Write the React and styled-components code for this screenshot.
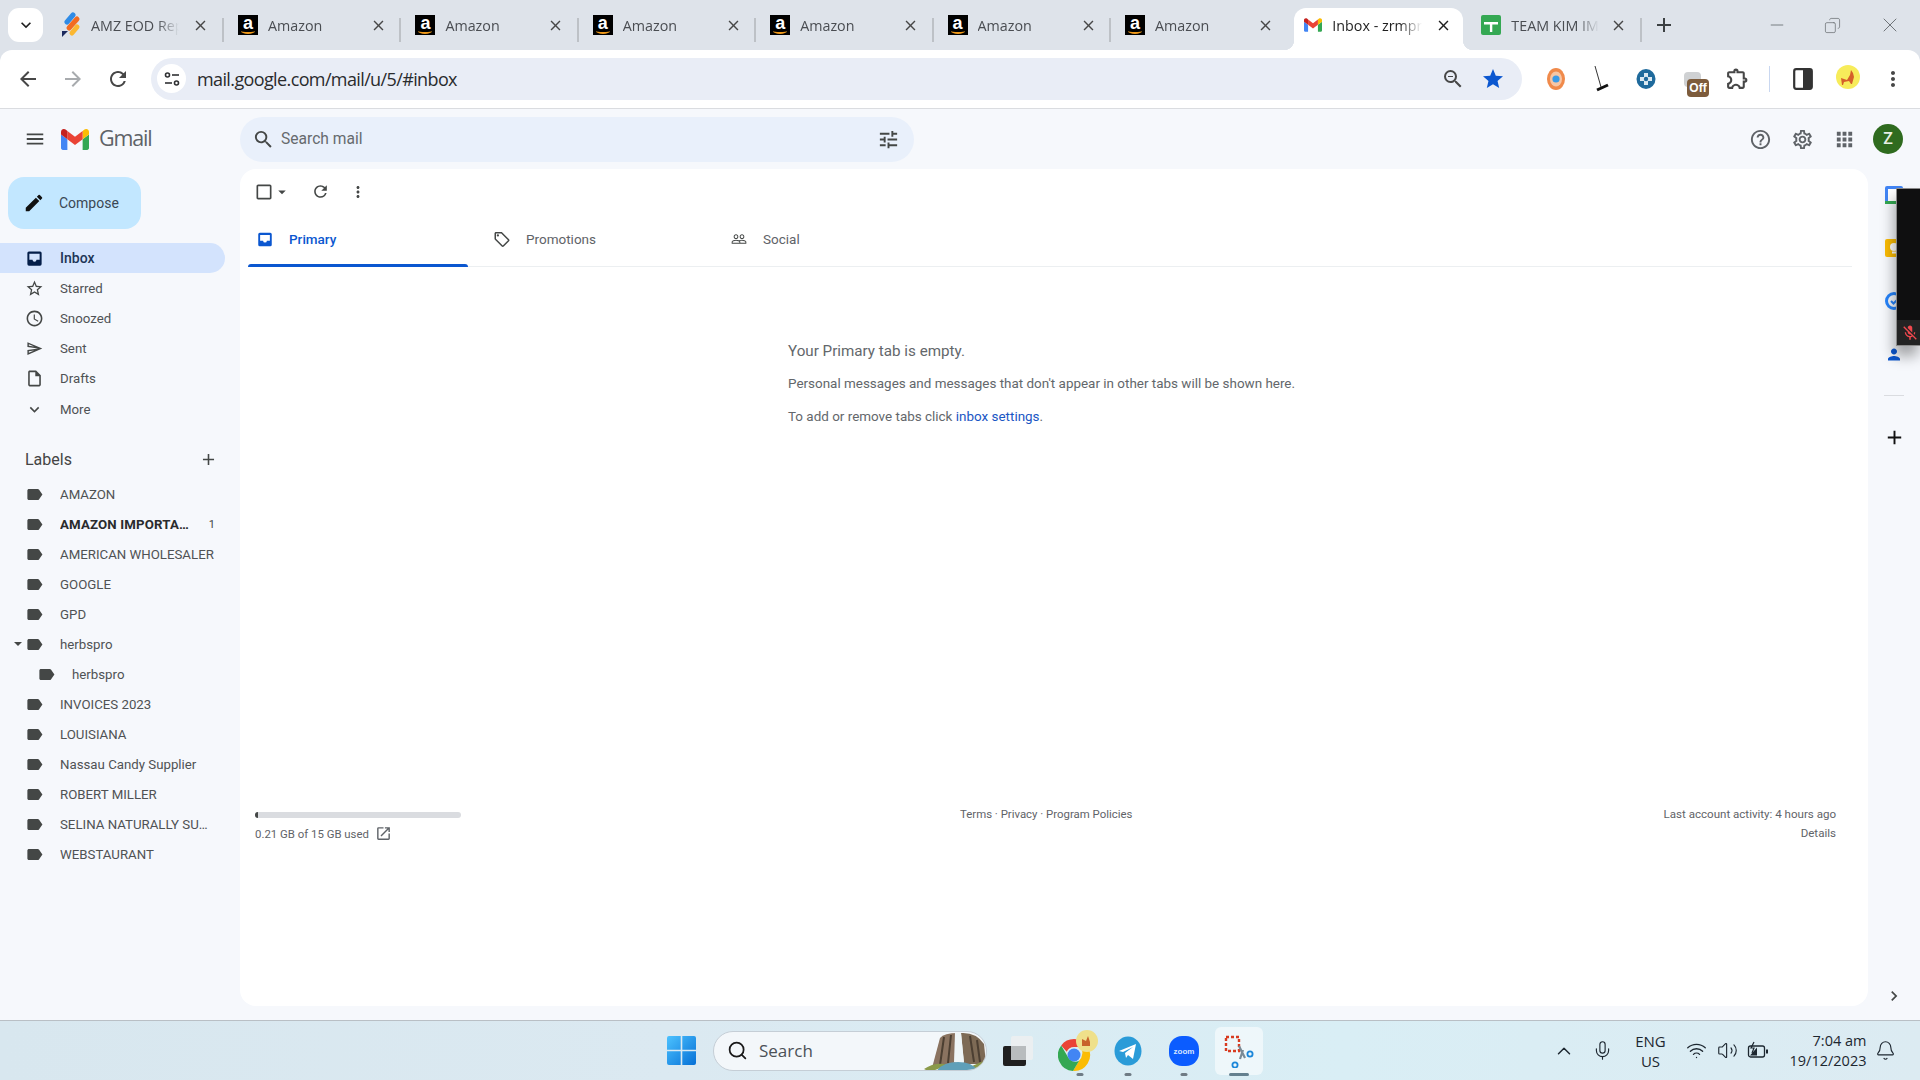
import React from "react";
import styled, { createGlobalStyle } from "styled-components";
import {
  MdArrowBack, MdArrowForward, MdRefresh, MdClose, MdAdd, MdStar, MdMoreVert, MdZoomOut, MdOutlineExtension,
  MdMenu, MdSearch, MdTune, MdHelpOutline, MdOutlineSettings, MdApps, MdEdit, MdStarBorder, MdAccessTime,
  MdOutlineSend, MdOutlineInsertDriveFile, MdExpandMore, MdLabel, MdCheckBoxOutlineBlank, MdArrowDropDown,
  MdOutlineLocalOffer, MdPeopleOutline, MdOpenInNew, MdChevronRight, MdPerson, MdKeyboardArrowDown,
  MdMicOff,
} from "react-icons/md";
import { Minus, Copy, X, ChevronUp, Mic, Bell, Wifi, Volume2, Search as SearchGlyph } from "lucide-react";

const Global = createGlobalStyle`
  html, body { margin: 0; padding: 0; background: #f6f8fc; overflow: hidden; }
  * { box-sizing: border-box; }
  body { font-family: Roboto, "Liberation Sans", sans-serif; }
`;

const Screen = styled.div`
  width: 1920px; height: 1080px; display: flex; flex-direction: column; overflow: hidden; background: #dee3ea;
`;

/* ---------- Browser tab strip ---------- */
const TabStrip = styled.div`
  height: 50px; flex: none; display: flex; align-items: flex-end; padding-left: 8px; background: #dee3ea;
  font-family: "Open Sans", Roboto, sans-serif;
`;
const TabSearch = styled.div`
  width: 35px; height: 34px; margin: 0 4px 8px 0; background: #fff; border-radius: 11px; flex: none;
  display: flex; align-items: center; justify-content: center; color: #1f1f1f; font-size: 20px;
`;
const Tab = styled.div`
  width: ${p => p.$w}px; height: 42px; flex: none; display: flex; align-items: center; padding: 0 0 8px ${p => p.$pad}px;
  position: relative; color: #4a4d52;
`;
const Sep = styled.i`
  width: 2px; height: 24px; background: #bdc1c6; flex: none; margin-bottom: 8px; margin-left: ${p => p.$ml || 0}px;
`;
const ActiveTab = styled(Tab)`
  background: #fff; border-radius: 12px 12px 0 0; color: #1f1f1f; margin-left: 8px;
  &::before, &::after { content: ""; position: absolute; bottom: 0; width: 10px; height: 10px; }
  &::before { left: -10px; background: radial-gradient(circle at 0 0, transparent 10px, #fff 10.5px); }
  &::after { right: -10px; background: radial-gradient(circle at 100% 0, transparent 10px, #fff 10.5px); }
`;
const TabTitle = styled.span`
  width: ${p => p.$w}px; margin-left: 10px; white-space: nowrap; overflow: hidden; flex: none; font-size: 14.3px;
  -webkit-mask-image: linear-gradient(90deg, #000 75%, transparent 100%); mask-image: linear-gradient(90deg, #000 75%, transparent 100%);
`;
const TabClose = styled.span`
  display: flex; color: ${p => p.$dark ? "#1f1f1f" : "#474747"}; font-size: 17px; flex: none; margin-left: ${p => p.$ml || 0}px;
`;
const AmazonMark = styled.span`
  width: 20px; height: 20px; background: #000; color: #fff; display: flex; justify-content: center; position: relative; flex: none;
  font: bold 18px/16px "Liberation Sans", sans-serif;
  &::after { content: ""; position: absolute; left: 3px; right: 3px; bottom: 1px; height: 4px; border-bottom: 2px solid #f09a1a; border-radius: 0 0 50% 50%; }
`;
const NewTab = styled.span`
  display: flex; font-size: 24px; color: #3c4043; margin: 0 0 13px 10px;
`;
const WinControls = styled.div`
  margin-left: auto; display: flex; align-items: center; gap: 37px; padding: 0 18px 13px 0; color: #6f7478;
`;
const WinButton = styled.span`display: flex;`;

/* ---------- Browser toolbar ---------- */
const BrowserBar = styled.div`
  height: 59px; flex: none; background: #fff; border-radius: 12px 12px 0 0; border-bottom: 1px solid #dadce0;
  display: flex; align-items: center; padding: 0 0 1px 16px;
`;
const NavIcon = styled.span`
  width: 24px; display: flex; justify-content: center; font-size: 24px; margin-right: ${p => p.$mr}px; color: ${p => p.$c || "#474747"};
`;
const Omnibox = styled.div`
  width: 1371px; height: 42px; border-radius: 21px; background: #e9edf6; display: flex; align-items: center; padding: 0 17px 0 6px; flex: none;
`;
const SiteInfo = styled.span`
  width: 29px; height: 29px; border-radius: 50%; background: #fff; display: flex; align-items: center; justify-content: center; flex: none;
`;
const Url = styled.span`
  margin-left: 11px; font: 400 18px "Open Sans", Roboto, sans-serif; letter-spacing: -0.62px; color: #2a2b2d; flex: 1;
`;
const ExtRow = styled.div`
  display: flex; align-items: center; margin-left: 20px; flex: 1; color: #474747;
`;
const ExtSlot = styled.span`
  width: 28px; flex: none; display: flex; justify-content: center; align-items: center; position: relative; margin-left: ${p => p.$ml || 0}px;
`;
const OffBadge = styled.span`
  position: absolute; left: 4px; top: 11px; width: 22px; height: 18px; background: #7d5c3c; color: #fff; border-radius: 4px;
  font: 700 12px/18px "Liberation Sans", sans-serif; text-align: center;
`;
const ToolDivider = styled.i`
  width: 1px; height: 26px; background: #c9d7f0; flex: none;
`;

/* ---------- Gmail ---------- */
const GmailShell = styled.div`
  flex: 1; min-height: 0; background: #f6f8fc; display: flex; flex-direction: column;
`;
const TopBar = styled.header`
  height: 60px; flex: none; display: flex; align-items: center;
`;
const Brand = styled.div`
  width: 240px; flex: none; display: flex; align-items: center; padding-left: 24px; color: #5f6368;
`;
const Burger = styled.span`display: flex; font-size: 22px; color: #444746; margin-right: 15px;`;
const Wordmark = styled.span`
  font: 400 21.5px/26px "Open Sans", Roboto, sans-serif; letter-spacing: -1.15px; color: #5f6368; margin: -2px 0 0 10px;
`;
const SearchBox = styled.div`
  width: 674px; height: 45px; border-radius: 23px; background: #e9f0fb; display: flex; align-items: center; padding: 0 14px 0 12px; color: #444746;
`;
const SearchText = styled.span`
  flex: 1; margin-left: 6px; font-size: 15.6px; color: #666a6e;
`;
const TopIcons = styled.div`
  margin-left: auto; display: flex; align-items: center; color: #5f6368;
`;
const TopIcon = styled.span`
  width: 42px; display: flex; justify-content: center; font-size: 23px;
`;
const Avatar = styled.span`
  width: 30px; height: 30px; border-radius: 50%; background: #2f6b1f; color: #e8efe5; font: 500 16px/30px Roboto, sans-serif; text-align: center; margin: 0 17px 0 8px;
`;
const Body = styled.div`
  flex: 1; min-height: 0; display: flex;
`;
const Sidebar = styled.nav`
  width: 240px; flex: none; display: flex; flex-direction: column;
`;
const Compose = styled.div`
  width: 133px; height: 52px; margin: 8px 0 14px 8px; border-radius: 16px; background: #c2e7ff; display: flex; align-items: center; padding-left: 16px;
  color: #3a4854; font-size: 14px; font-weight: 400;
`;
const ComposeIcon = styled.span`display: flex; font-size: 22px; color: #111; margin-right: 14px; margin-left: -1px;`;
const NavRow = styled.div`
  width: 225px; height: ${p => p.$h || 30}px; flex: none; display: flex; align-items: center; position: relative;
  padding-left: ${p => p.$indent ? 36 : 24}px; border-radius: 0 15px 15px 0; font-size: ${p => p.$active ? 14 : 13.25}px;
  background: ${p => p.$active ? "#d3e3fd" : "transparent"};
  color: ${p => p.$active ? "#1d3557" : "#4f5254"};
  font-weight: ${p => p.$active ? 500 : p.$bold ? 700 : 400};
  ${p => p.$bold ? "color:#2a2b2d; letter-spacing: .15px;" : ""}
`;
const NavIconSlot = styled.span`
  width: 20px; flex: none; display: flex; justify-content: center; font-size: ${p => p.$s || 19}px; margin-right: 16px;
  color: ${p => p.$active ? "#041e49" : "#444746"};
`;
const NavText = styled.span`
  white-space: nowrap; flex: 1; overflow: hidden; text-overflow: ellipsis; padding-right: ${p => p.$pr || 8}px;
`;
const Count = styled.span`
  font-size: 11px; font-weight: 400; color: #444746; margin-right: 10px;
`;
const Caret = styled.span`
  position: absolute; left: 14px; top: 13px; width: 0; height: 0; border: 4px solid transparent; border-top: 4px solid #444746; 
`;
const LabelsHead = styled.div`
  width: 225px; height: 30px; margin: 19px 0 5px; display: flex; align-items: center; justify-content: space-between;
  padding: 0 7px 0 25px; font-size: 16px; color: #444;
`;
const HeadAdd = styled.span`display: flex; font-size: 19px; color: #444746;`;

const MainPanel = styled.main`
  width: 1628px; flex: none; height: 837px; background: #fff; border-radius: 16px; display: flex; flex-direction: column;
`;
const MailTools = styled.div`
  height: 45px; flex: none; display: flex; align-items: center; padding-left: 14px; color: #444746;
`;
const ToolIcon = styled.span`
  display: flex; font-size: ${p => p.$s || 18}px; margin-left: ${p => p.$ml || 0}px;
`;
const CategoryBar = styled.div`
  height: 53px; margin: 0 16px 0 8px; flex: none; display: flex; box-shadow: inset 0 -1px #eceff1;
`;
const Category = styled.div`
  width: 237px; display: flex; position: relative; align-items: center; padding: 0 0 3px 8px; font-size: 13.5px; font-weight: ${p => p.$active ? 500 : 400};
  color: ${p => p.$active ? "#0b57d0" : "#5f6368"};
  ${p => p.$active ? `&::after { content: ""; position: absolute; left: 0; bottom: 0; width: 220px; height: 3px; background: #0b57d0; border-radius: 3px 3px 0 0; }` : ""}
`;
const CategoryIcon = styled.span`
  display: flex; width: 18px; justify-content: center; font-size: 19px; margin-right: 15px; color: ${p => p.$active ? "#0b57d0" : "#444746"};
`;
const Empty = styled.section`
  margin: 68px 0 0 548px; color: #63676b; font-size: 13.45px; line-height: 33px;
`;
const EmptyHead = styled.div`font-size: 15.2px; line-height: 32px;`;
const Link = styled.a`color: #1a56c4;`;
const MailFooter = styled.footer`
  margin-top: 379px; padding: 0 32px 0 15px; display: grid; grid-template-columns: 705px auto 1fr; font-size: 11.4px; color: #5f6368;
`;
const Storage = styled.div`display: flex; flex-direction: column;`;
const Meter = styled.div`
  width: 206px; height: 6px; border-radius: 3px; background: #dadce0; margin-bottom: 7px; overflow: hidden;
`;
const MeterFill = styled.div`height: 100%; background: #444746;`;
const StorageText = styled.div`display: flex; align-items: center;`;
const StorageLink = styled.span`display: flex; font-size: 17px; margin-left: 6px;`;
const Policies = styled.div`margin-top: -5px;`;
const Activity = styled.div`text-align: right; line-height: 19px; margin-top: -7px; font-size: 11.55px;`;

const Rail = styled.aside`
  width: 52px; flex: none; display: flex; flex-direction: column; align-items: center; position: relative; padding-top: 17px;
`;
const RailIcon = styled.span`
  display: flex; height: 18px; width: 18px; margin-bottom: 35px; position: relative; font-size: 23px; justify-content: center; align-items: center;
  color: #0b57d0;
`;
const RailDivider = styled.i`width: 20px; height: 1px; background: #dadce0; margin: -3px 0 30px;`;
const RailAdd = styled.span`display: flex; font-size: 23px; color: #111;`;
const RailChevron = styled.span`display: flex; font-size: 20px; color: #444746; margin-top: auto; margin-bottom: 14px;`;
const VideoOverlay = styled.div`
  position: absolute; left: 28px; top: 19px; width: 24px; height: 158px; background: #0f0f10; border: 1px solid #8a8a8a; border-right: 0;
  box-shadow: -2px 10px 14px rgba(0,0,0,.35); display: flex; flex-direction: column; justify-content: flex-end;
`;
const VideoStrip = styled.div`
  height: 25px; background: #232323; display: flex; align-items: center; padding-left: 4px; color: #f0484e; font-size: 18px;
`;

/* ---------- Windows taskbar ---------- */
const Taskbar = styled.footer`
  height: 60px; flex: none; background: linear-gradient(90deg, #d8e7ef 0%, #dbe9f1 35%, #d9eef5 70%, #dcebf2 100%);
  border-top: 1px solid #b9bfc5; display: flex; align-items: center; padding-left: 667px; color: #1d2730;
  font-family: "Open Sans", Roboto, sans-serif;
`;
const Pill = styled.div`
  width: 274px; height: 40px; margin: 0 16px 0 17px; border-radius: 20px; background: #f3f7fa; border: 1px solid #c5ced6; position: relative; overflow: hidden;
  display: flex; align-items: center; padding-left: 13px; font-size: 17px; color: #4b5157;
`;
const PillIcon = styled.span`display: flex; color: #1a1a1a; margin-right: 11px;`;
const AppSlot = styled.span`
  width: ${p => p.$w}px; height: 48px; flex: none; display: flex; align-items: center; justify-content: center; position: relative; margin-left: ${p => p.$ml || 0}px;
  ${p => p.$on ? "background: rgba(255,255,255,.55); border-radius: 6px;" : ""}
  &::after { content: ""; position: absolute; bottom: -1px; left: 50%; transform: translateX(-50%); width: ${p => p.$on ? 20 : 7}px; height: 3px; border-radius: 2px; background: ${p => p.$on ? "#64808f" : "#6f7b84"}; display: ${p => p.$bare ? "none" : "block"}; }
`;
const Tray = styled.div`
  margin-left: auto; display: flex; align-items: center; color: #1d2730; padding-right: 15.5px;
`;
const TrayIcon = styled.span`
  display: flex; justify-content: center; width: ${p => p.$w}px; margin-left: ${p => p.$ml || 0}px;
`;
const TrayText = styled.span`
  font-size: ${p => p.$right ? 14.5 : 15}px; line-height: 20px; text-align: ${p => p.$right ? "right" : "center"}; width: ${p => p.$w}px; white-space: nowrap;
`;

/* ---------- Drawings ---------- */
const InboxFilled = () => (
  <svg width="1em" height="1em" viewBox="0 0 24 24" fill="currentColor">
    <path fillRule="evenodd" d="M5 3h14a2 2 0 012 2v14a2 2 0 01-2 2H5a2 2 0 01-2-2V5a2 2 0 012-2zm.5 3v7.5h4a2.5 2.5 0 005 0h4V6z" />
  </svg>
);
const GmailM = ({ w = 28, h = 21 }) => (
  <svg width={w} height={h} viewBox="52 42 88 66">
    <path fill="#4285f4" d="M58 108h14V74L52 59v43c0 3.32 2.69 6 6 6" />
    <path fill="#34a853" d="M120 108h14c3.32 0 6-2.69 6-6V59l-20 15" />
    <path fill="#fbbc04" d="M120 48v26l20-15v-8c0-7.42-8.47-11.65-14.4-7.2" />
    <path fill="#ea4335" d="M72 74V48l24 18 24-18v26L96 92" />
    <path fill="#c5221f" d="M52 51v8l20 15V48l-5.6-4.2c-5.94-4.45-14.4-.22-14.4 7.2" />
  </svg>
);
const JiraMark = () => (
  <svg width="20" height="26" viewBox="0 0 20 26" style={{ flex: "none" }}>
    <line x1="6" y1="10" x2="12" y2="3" stroke="#2f8be6" strokeWidth="5" strokeLinecap="round" />
    <line x1="8" y1="16" x2="16" y2="7" stroke="#f26b21" strokeWidth="5" strokeLinecap="round" />
    <line x1="11" y1="21" x2="16" y2="15" stroke="#fbb731" strokeWidth="5" strokeLinecap="round" />
    <path d="M1 19h6l-6 6z" fill="#1c2a5e" />
  </svg>
);
const SheetsMark = () => (
  <svg width="20" height="20" viewBox="0 0 20 20" style={{ flex: "none" }}>
    <rect width="20" height="20" rx="2" fill="#34a853" />
    <path d="M3 7h14v2.4H11.3V17H8.9V9.4H3z" fill="#fff" />
  </svg>
);
const TuneMini = () => (
  <svg width="16" height="16" viewBox="0 0 16 16" fill="none" stroke="#303134" strokeWidth="1.6">
    <circle cx="3.5" cy="4" r="2" /><path d="M8 4h7" />
    <circle cx="12.5" cy="12" r="2" /><path d="M1 12h7" />
  </svg>
);
const OrangeExt = () => (
  <svg width="20" height="24" viewBox="0 0 20 24">
    <ellipse cx="10" cy="12" rx="9" ry="11" fill="#f08a4b" />
    <ellipse cx="10" cy="12" rx="6" ry="7.5" fill="#f7c6a5" />
    <circle cx="10" cy="12" r="3.6" fill="#3b9be8" />
  </svg>
);
const Broom = () => (
  <svg width="22" height="28" viewBox="0 0 22 28" fill="none">
    <path d="M5 1l6 21" stroke="#333" strokeWidth="1" />
    <path d="M7 25l11-5" stroke="#111" strokeWidth="3" />
  </svg>
);
const CrossExt = () => (
  <svg width="20" height="24" viewBox="0 0 20 24">
    <ellipse cx="10" cy="12" rx="9.5" ry="10" fill="#1f6a9c" />
    <path d="M8 6h4v4h4v4h-4v4H8v-4H4v-4h4z" fill="#dce9f1" />
    <circle cx="10" cy="12" r="2.2" fill="#1f6a9c" />
  </svg>
);
const OffExt = () => (
  <svg width="26" height="22" viewBox="0 0 26 22">
    <rect x="0" y="4" width="17" height="15" rx="4" fill="#cfd1d3" />
  </svg>
);
const SidePanel = () => (
  <svg width="20" height="22" viewBox="0 0 20 22">
    <rect x="1.2" y="1.2" width="17.6" height="19.6" rx="2" fill="none" stroke="#333" strokeWidth="2.2" />
    <rect x="10" y="1" width="9" height="20" rx="1" fill="#333" />
  </svg>
);
const FoxAvatar = () => (
  <svg width="26" height="28" viewBox="0 0 26 28">
    <ellipse cx="13" cy="12" rx="12" ry="12" fill="#f7ec5a" />
    <path d="M6 13l6 2 3-5 1-5 2 3 1 4-2 7h-1l-2-3-5 1-1 3H7z" fill="#d5602a" />
  </svg>
);
const CalendarMark = () => (
  <svg width="18" height="18" viewBox="0 0 18 18">
    <rect width="18" height="18" rx="2" fill="#4285f4" />
    <rect x="3" y="3" width="12" height="12" fill="#fff" />
    <rect y="15" width="18" height="3" fill="#34a853" />
  </svg>
);
const KeepMark = () => (
  <svg width="18" height="18" viewBox="0 0 18 18">
    <rect width="18" height="18" rx="2" fill="#fbbc04" />
    <circle cx="9" cy="8" r="4" fill="#fff" />
    <rect x="7" y="12.5" width="4" height="2" fill="#fff" />
  </svg>
);
const TasksMark = () => (
  <svg width="18" height="18" viewBox="0 0 18 18" fill="none">
    <circle cx="9" cy="9" r="7.5" stroke="#2684fc" strokeWidth="3" />
    <path d="M6 9l2.5 2.5L13 7" stroke="#2684fc" strokeWidth="2" />
  </svg>
);
const WinLogo = () => (
  <svg width="29" height="29" viewBox="0 0 29 29" style={{ flex: "none" }}>
    <defs>
      <linearGradient id="wl" x1="0" y1="0" x2="1" y2="1"><stop offset="0" stopColor="#4cc2ff" /><stop offset="1" stopColor="#0670d6" /></linearGradient>
    </defs>
    <path d="M0 2a2 2 0 012-2h11.7v13.7H0zM15.3 0H27a2 2 0 012 2v11.7H15.3zM0 15.3h13.7V29H2a2 2 0 01-2-2zM15.3 15.3H29V27a2 2 0 01-2 2H15.3z" fill="url(#wl)" />
  </svg>
);
const Waterfall = () => (
  <svg width="62" height="40" viewBox="0 0 62 40" style={{ position: "absolute", right: 0, top: 0 }}>
    <path d="M8 36L16 6Q20 1 34 1L33 30z" fill="#8a7360" />
    <path d="M37 1Q52 0 60 12L62 32L40 32z" fill="#7d6a55" />
    <path d="M20 5l-4 28M27 3l-3 28M46 4l4 26M53 8l3 22" stroke="#4c3f32" strokeWidth="2" />
    <path d="M31 1h6l3 29h-10z" fill="#eef5f7" />
    <path d="M0 37Q12 29 24 33L6 40zM48 34L62 28V40H50z" fill="#8a9a4a" />
    <path d="M12 40q6-10 22-10t20 10z" fill="#5f9fb8" />
  </svg>
);
const TaskView = () => (
  <svg width="30" height="30" viewBox="0 0 30 30">
    <rect y="10" width="23" height="20" rx="2" fill="#1f1f1f" />
    <rect x="8" y="0" width="22" height="24" rx="2" fill="#eceff1" fillOpacity=".9" />
    <rect x="8" y="10" width="15" height="14" fill="#b8bcbe" />
  </svg>
);
const ChromeLogo = () => (
  <svg width="44" height="44" viewBox="0 0 44 44">
    <g transform="translate(0,10)">
      <path d="M16 0a16 16 0 0113.9 8H16a8 8 0 00-7.3 4.7L3.2 6.4A16 16 0 0116 0z" fill="#ea4335" />
      <path d="M29.9 8A16 16 0 0115 32l6.3-10.6A8 8 0 0024 16a8 8 0 00-2-8z" fill="#fbbc04" />
      <path d="M15 32A16 16 0 013.2 6.4l6.3 10.9a8 8 0 0011.8 4.1z" fill="#34a853" />
      <circle cx="16" cy="16" r="6.5" fill="#4285f4" />
    </g>
    <circle cx="29" cy="12" r="11" fill="#efe08a" />
    <path d="M24 17v-7l4 2 2-5 2 6v4z" fill="#c8632b" />
  </svg>
);
const TelegramLogo = () => (
  <svg width="28" height="30" viewBox="0 0 28 30">
    <ellipse cx="14" cy="15" rx="13.5" ry="14.5" fill="#2a9bd8" />
    <path d="M5 15l17-7-3 15-5-4-2 3-1-5 8-6-10 5z" fill="#fff" />
  </svg>
);
const ZoomLogo = () => (
  <svg width="30" height="30" viewBox="0 0 30 30">
    <rect width="30" height="30" rx="13" fill="#0b5cff" />
    <text x="15" y="18" textAnchor="middle" fontSize="8" fontWeight="700" fill="#d7e4ff" fontFamily="Liberation Sans, sans-serif">zoom</text>
  </svg>
);
const SnipLogo = () => (
  <svg width="32" height="34" viewBox="0 0 32 34" fill="none">
    <rect x="3" y="3" width="13" height="14" stroke="#d83b20" strokeWidth="2.4" strokeDasharray="3 2" />
    <path d="M16 12l6 12M20 16l-3 9" stroke="#7a8a96" strokeWidth="2.2" />
    <circle cx="27" cy="20" r="2.6" stroke="#1a86d9" strokeWidth="1.8" />
    <circle cx="12" cy="31" r="2.6" stroke="#1a86d9" strokeWidth="1.8" />
  </svg>
);
const BatteryCharging = () => (
  <svg width="22" height="20" viewBox="0 0 22 20" fill="none">
    <rect x="1.5" y="5" width="16" height="11" rx="2" stroke="#1d2730" strokeWidth="1.3" />
    <path d="M19 8.5h2v4h-2z" fill="#1d2730" />
    <path d="M3 14.5l7-8v8z" fill="#1d2730" />
    <path d="M7 1L4 7h3l-2 5" stroke="#1d2730" strokeWidth="1.2" />
  </svg>
);

const NAV = [
  { t: "Inbox", I: InboxFilled, active: true },
  { t: "Starred", I: MdStarBorder },
  { t: "Snoozed", I: MdAccessTime },
  { t: "Sent", I: MdOutlineSend, s: 17 },
  { t: "Drafts", I: MdOutlineInsertDriveFile },
  { t: "More", I: MdExpandMore, h: 32 },
];
const LABELS = [
  { t: "AMAZON" }, { t: "AMAZON IMPORTANT", bold: true, n: 1, pr: 15 }, { t: "AMERICAN WHOLESALER" }, { t: "GOOGLE" }, { t: "GPD" },
  { t: "herbspro", caret: true }, { t: "herbspro", indent: true }, { t: "INVOICES 2023" }, { t: "LOUISIANA" },
  { t: "Nassau Candy Supplier" }, { t: "ROBERT MILLER" }, { t: "SELINA NATURALLY SUPPLIER", pr: 15 }, { t: "WEBSTAURANT" },
];

export default function App() {
  return (
    <Screen>
      <Global />
      <TabStrip>
        <TabSearch><MdKeyboardArrowDown /></TabSearch>
        <Tab $w={175} $pad={14}>
          <JiraMark /><TabTitle $w={88}>AMZ EOD Report</TabTitle><TabClose $ml={13}><MdClose /></TabClose>
        </Tab>
        <Sep />
        {[0, 1, 2, 3, 4, 5].map(i => (
          <React.Fragment key={i}>
            <Tab $w={175.4} $pad={14}>
              <AmazonMark>a</AmazonMark><TabTitle $w={88}>Amazon</TabTitle><TabClose $ml={14}><MdClose /></TabClose>
            </Tab>
            {i < 5 && <Sep />}
          </React.Fragment>
        ))}
        <ActiveTab $w={169} $pad={10}>
          <GmailM w={18} h={14} /><TabTitle $w={90}>Inbox - zrmpro@gmail.com</TabTitle><TabClose $dark $ml={13}><MdClose /></TabClose>
        </ActiveTab>
        <Tab $w={177} $pad={18}>
          <SheetsMark /><TabTitle $w={88}>TEAM KIM IMPORT</TabTitle><TabClose $ml={11}><MdClose /></TabClose>
        </Tab>
        <Sep />
        <NewTab><MdAdd /></NewTab>
        <WinControls>
          <WinButton><Minus size={20} strokeWidth={1.1} /></WinButton>
          <WinButton><Copy size={17} strokeWidth={1.1} style={{ transform: "scaleX(-1)" }} /></WinButton>
          <WinButton><X size={24} strokeWidth={1} /></WinButton>
        </WinControls>
      </TabStrip>

      <BrowserBar>
        <NavIcon $mr={21}><MdArrowBack /></NavIcon>
        <NavIcon $mr={21} $c="#a8abae"><MdArrowForward /></NavIcon>
        <NavIcon $mr={21}><MdRefresh /></NavIcon>
        <Omnibox>
          <SiteInfo><TuneMini /></SiteInfo>
          <Url>mail.google.com/mail/u/5/#inbox</Url>
          <NavIcon $mr={16}><MdZoomOut /></NavIcon>
          <NavIcon $mr={0} $c="#0b57d0"><MdStar /></NavIcon>
        </Omnibox>
        <ExtRow>
          <ExtSlot><OrangeExt /></ExtSlot>
          <ExtSlot $ml={17}><Broom /></ExtSlot>
          <ExtSlot $ml={17}><CrossExt /></ExtSlot>
          <ExtSlot $ml={23}><OffExt /><OffBadge>Off</OffBadge></ExtSlot>
          <ExtSlot $ml={12}><MdOutlineExtension size={25} /></ExtSlot>
          <ExtSlot $ml={4}><ToolDivider /></ExtSlot>
          <ExtSlot $ml={6}><SidePanel /></ExtSlot>
          <ExtSlot $ml={17}><FoxAvatar /></ExtSlot>
          <ExtSlot $ml={17}><MdMoreVert size={24} /></ExtSlot>
        </ExtRow>
      </BrowserBar>

      <GmailShell>
        <TopBar>
          <Brand>
            <Burger><MdMenu /></Burger>
            <GmailM />
            <Wordmark>Gmail</Wordmark>
          </Brand>
          <SearchBox>
            <MdSearch size={23} />
            <SearchText>Search mail</SearchText>
            <MdTune size={23} />
          </SearchBox>
          <TopIcons>
            <TopIcon><MdHelpOutline /></TopIcon>
            <TopIcon><MdOutlineSettings /></TopIcon>
            <TopIcon><MdApps /></TopIcon>
            <Avatar>Z</Avatar>
          </TopIcons>
        </TopBar>
        <Body>
          <Sidebar>
            <Compose><ComposeIcon><MdEdit /></ComposeIcon>Compose</Compose>
            {NAV.map(n => (
              <NavRow key={n.t} $active={n.active} $h={n.h}>
                <NavIconSlot $active={n.active} $s={n.s}><n.I /></NavIconSlot>
                <NavText>{n.t}</NavText>
              </NavRow>
            ))}
            <LabelsHead>Labels<HeadAdd><MdAdd /></HeadAdd></LabelsHead>
            {LABELS.map((l, i) => (
              <NavRow key={i} $bold={l.bold} $indent={l.indent}>
                {l.caret && <Caret />}
                <NavIconSlot><MdLabel /></NavIconSlot>
                <NavText $pr={l.pr}>{l.t}</NavText>
                {l.n && <Count>{l.n}</Count>}
              </NavRow>
            ))}
          </Sidebar>

          <MainPanel>
            <MailTools>
              <ToolIcon $s={20}><MdCheckBoxOutlineBlank /></ToolIcon>
              <ToolIcon $s={18} $ml={-1}><MdArrowDropDown /></ToolIcon>
              <ToolIcon $s={19} $ml={20}><MdRefresh /></ToolIcon>
              <ToolIcon $s={18} $ml={19}><MdMoreVert /></ToolIcon>
            </MailTools>
            <CategoryBar>
              <Category $active><CategoryIcon $active><InboxFilled /></CategoryIcon>Primary</Category>
              <Category><CategoryIcon><MdOutlineLocalOffer /></CategoryIcon>Promotions</Category>
              <Category><CategoryIcon><MdPeopleOutline size={16} /></CategoryIcon>Social</Category>
            </CategoryBar>
            <Empty>
              <EmptyHead>Your Primary tab is empty.</EmptyHead>
              <div>Personal messages and messages that don't appear in other tabs will be shown here.</div>
              <div>To add or remove tabs click <Link>inbox settings</Link>.</div>
            </Empty>
            <MailFooter>
              <Storage>
                <Meter><MeterFill style={{ width: `${(0.21 / 15) * 100}%` }} /></Meter>
                <StorageText>0.21 GB of 15 GB used<StorageLink><MdOpenInNew /></StorageLink></StorageText>
              </Storage>
              <Policies>Terms · Privacy · Program Policies</Policies>
              <Activity>Last account activity: 4 hours ago<br />Details</Activity>
            </MailFooter>
          </MainPanel>

          <Rail>
            <RailIcon><CalendarMark /></RailIcon>
            <RailIcon><KeepMark /></RailIcon>
            <RailIcon><TasksMark /></RailIcon>
            <RailIcon><MdPerson /></RailIcon>
            <RailDivider />
            <RailAdd><MdAdd /></RailAdd>
            <RailChevron><MdChevronRight /></RailChevron>
            <VideoOverlay>
              <VideoStrip><MdMicOff /></VideoStrip>
            </VideoOverlay>
          </Rail>
        </Body>
      </GmailShell>

      <Taskbar>
        <WinLogo />
        <Pill><PillIcon><SearchGlyph size={21} strokeWidth={2} /></PillIcon>Search<Waterfall /></Pill>
        <AppSlot $w={30} $bare><TaskView /></AppSlot>
        <AppSlot $w={44} $ml={25}><ChromeLogo /></AppSlot>
        <AppSlot $w={28} $ml={12}><TelegramLogo /></AppSlot>
        <AppSlot $w={30} $ml={27}><ZoomLogo /></AppSlot>
        <AppSlot $w={48} $ml={16} $on><SnipLogo /></AppSlot>
        <Tray>
          <TrayIcon $w={26}><ChevronUp size={22} strokeWidth={1.6} /></TrayIcon>
          <TrayIcon $w={52}><Mic size={21} strokeWidth={1.3} /></TrayIcon>
          <TrayText $w={44}>ENG<br />US</TrayText>
          <TrayIcon $w={34} $ml={7}><Wifi size={21} strokeWidth={1.5} /></TrayIcon>
          <TrayIcon $w={28}><Volume2 size={21} strokeWidth={1.3} /></TrayIcon>
          <TrayIcon $w={32}><BatteryCharging /></TrayIcon>
          <TrayText $w={93} $right>7:04 am<br />19/12/2023</TrayText>
          <TrayIcon $w={38}><Bell size={21} strokeWidth={1.3} /></TrayIcon>
        </Tray>
      </Taskbar>
    </Screen>
  );
}
